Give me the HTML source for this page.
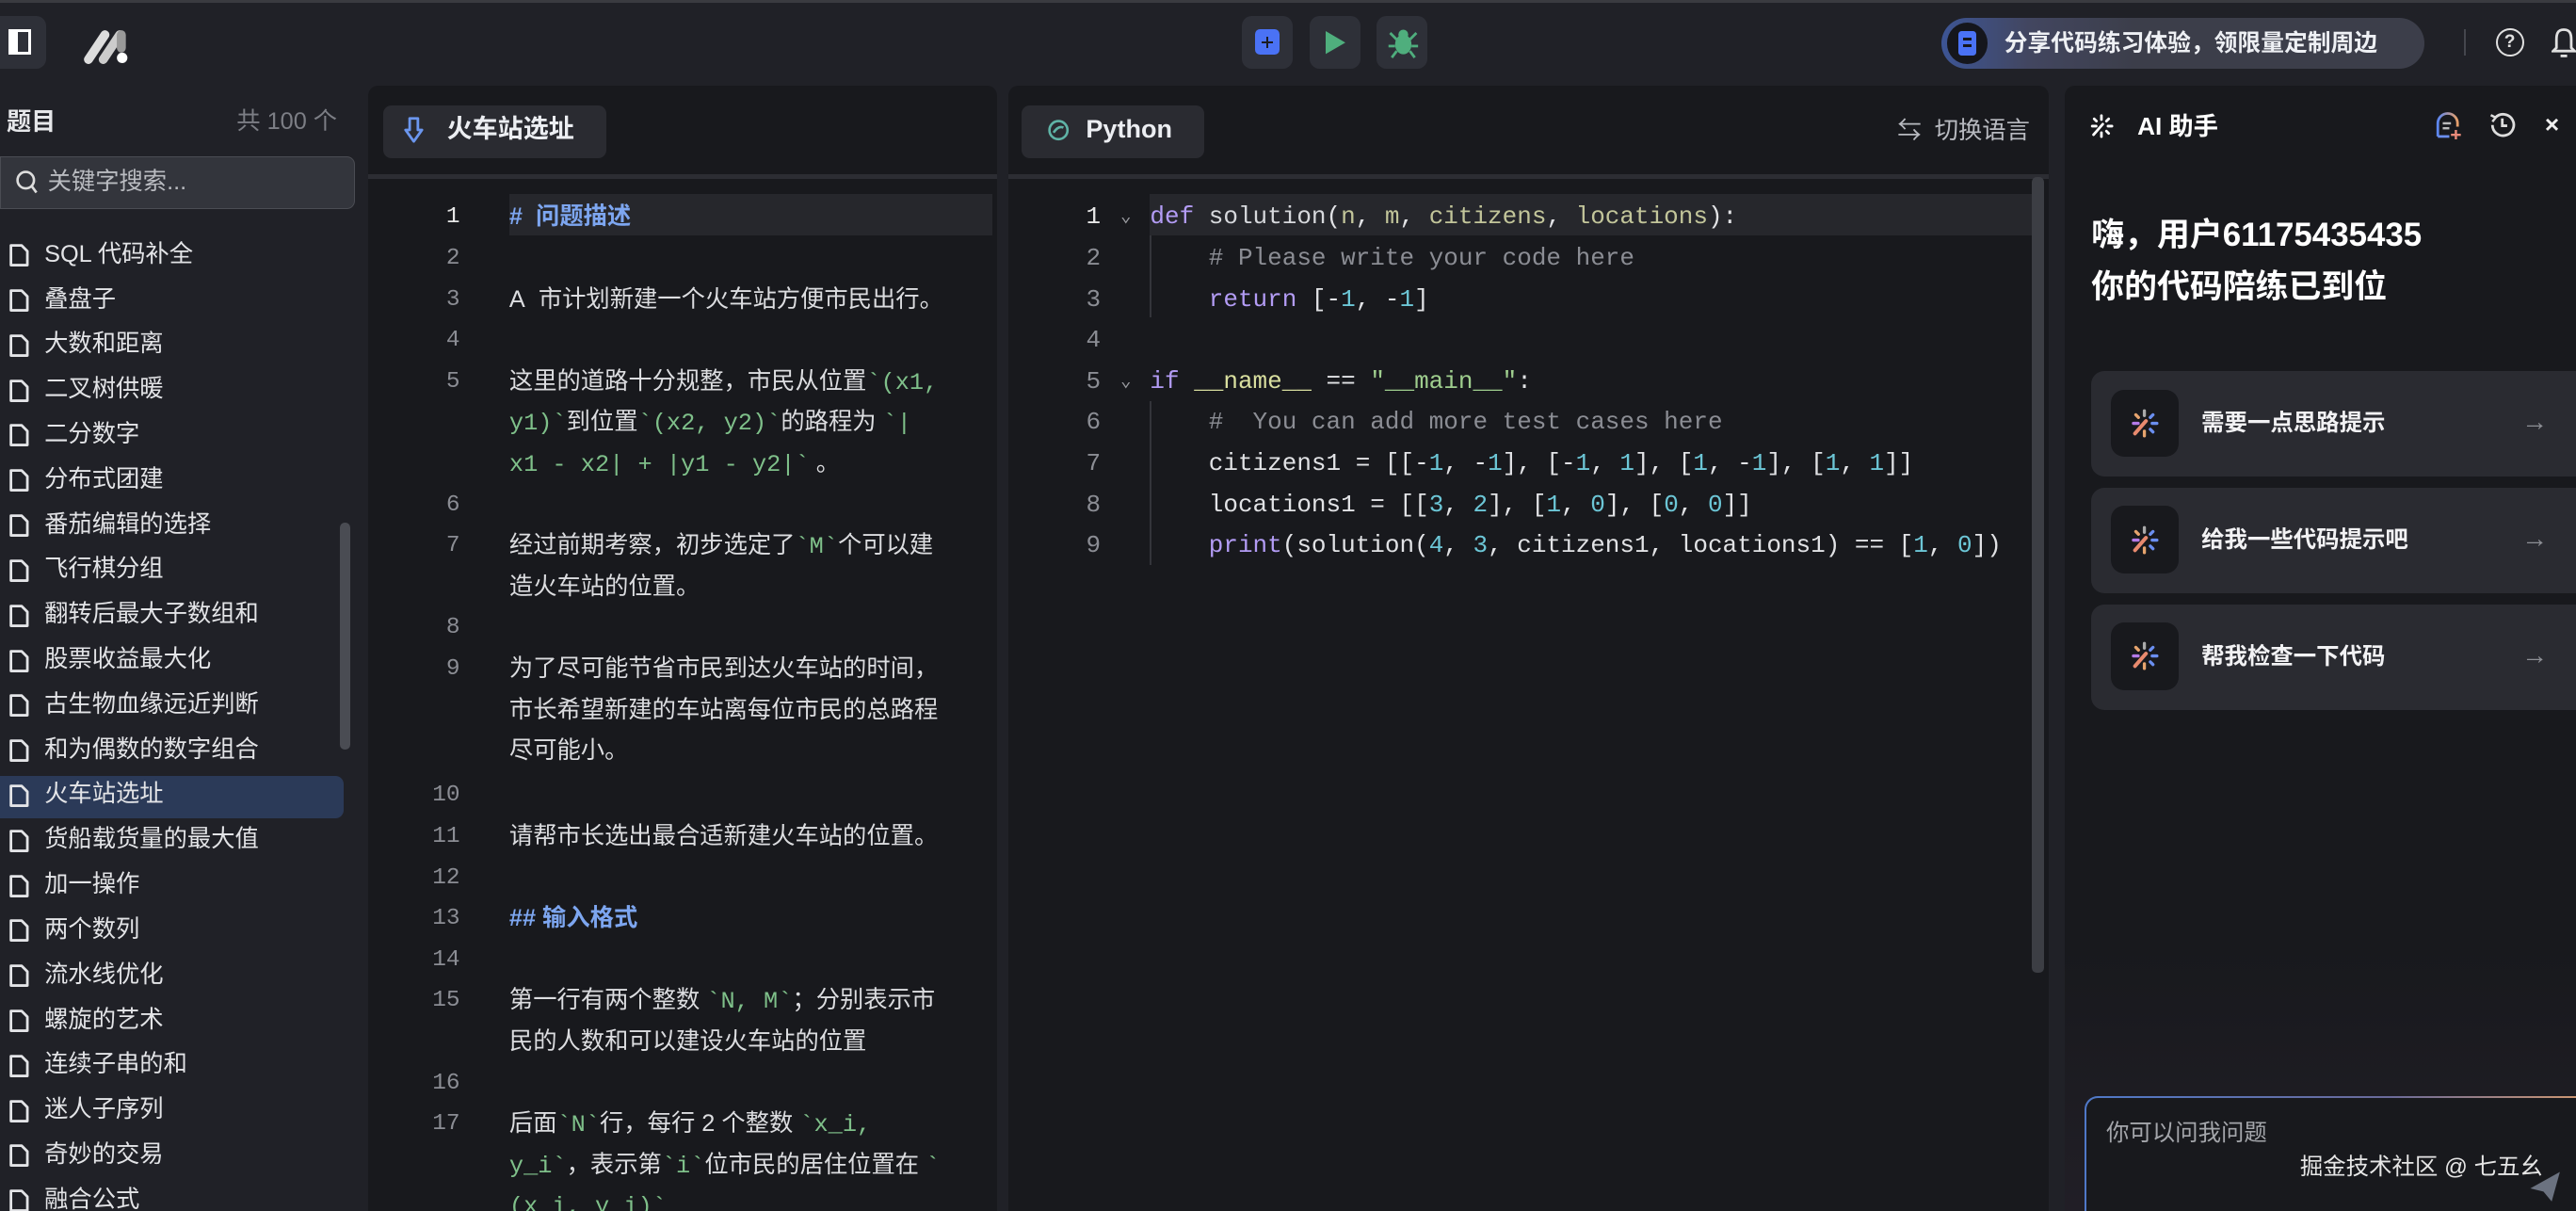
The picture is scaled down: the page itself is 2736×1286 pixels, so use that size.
<!DOCTYPE html>
<html><head><meta charset="utf-8">
<style>
html,body{margin:0;padding:0;background:#1f2026;overflow:hidden;width:2736px;height:1286px}
#r{zoom:1.74490;width:1568px;height:737px;position:relative;background:#202127;font-family:"Liberation Sans","Noto Sans CJK SC",sans-serif;color:#e6e7ea;overflow:hidden}
.a{position:absolute}
.mono{font-family:"Liberation Mono","Noto Sans CJK SC",monospace}
.btn{position:absolute;top:10px;width:31px;height:32px;background:#2e3038;border-radius:6px}
.side-item{position:absolute;left:0;height:26px;width:209px;font-size:14.5px;line-height:26px;color:#e3e4e7}
.side-item svg{position:absolute;left:5px;top:6px}
.side-item span{position:absolute;left:27px}
.md{position:absolute;left:224px;top:120px;width:380px}
.row{height:25px;line-height:25px;font-size:14.5px;position:relative;white-space:nowrap}
.row .n{position:absolute;left:0;width:56px;text-align:right;color:#8b8d94;font-family:"Liberation Mono",monospace;font-size:14px}
.row .t{position:absolute;left:86px;color:#dcdde0}
.g{color:#7fc08a;font-family:"Liberation Mono",monospace}
.row .t.h{color:#7da6f0;font-weight:bold}
.code{position:absolute;left:614px;top:120px}
.cr{height:25px;line-height:25px;font-size:14.9px;position:relative;white-space:pre}
.cr .n{position:absolute;left:0;width:56px;text-align:right;color:#8b8d94}
.cr .f{position:absolute;left:68px;color:#9a9ba0;font-size:11px}
.cr .t{position:absolute;left:86px;color:#e1e2e5}
.k{color:#b39cf5}.fn{color:#d6d8dc}.p{color:#c2c59a}.c{color:#8b8d94}.num{color:#6cc6d6}.s{color:#9fce8e}.nm{color:#d9df9f}
.card{position:absolute;left:1273px;width:310px;height:64px;background:#2a2b31;border-radius:8px}
.card .ic{position:absolute;left:12px;top:11px;width:41px;height:41px;background:#18191d;border-radius:8px}
.card .ic svg{position:absolute;left:11px;top:11px}
.card .tx{position:absolute;left:67px;top:0;line-height:64px;font-size:14px;font-weight:bold;color:#f2f2f4}
.card .ar{position:absolute;left:262px;top:0;line-height:62px;font-size:16px;color:#8d8f95}
</style></head><body><div id="r">
<svg width="0" height="0" style="position:absolute"><defs>
<symbol id="spk" viewBox="0 0 20 20"><g stroke-linecap="round" stroke-width="2">
<line x1="10" y1="2" x2="10" y2="5" stroke="#aaa"/>
<line x1="15.5" y1="4.5" x2="13.8" y2="6.2" stroke="#6b8ff0"/>
<line x1="18" y1="10" x2="15" y2="10" stroke="#6b8ff0"/>
<line x1="15.5" y1="15.5" x2="13.8" y2="13.8" stroke="#6b8ff0"/>
<line x1="10" y1="18" x2="10" y2="15" stroke="#e6a46e"/>
<line x1="3" y1="10" x2="6" y2="10" stroke="#b47ae8"/>
<line x1="4.5" y1="4.5" x2="6.2" y2="6.2" stroke="#e6a46e"/>
<line x1="4" y1="16.5" x2="11" y2="8.5" stroke="#e88a6e" stroke-width="2.4"/>
</g></symbol>
<symbol id="spw" viewBox="0 0 20 20"><g stroke-linecap="round" stroke-width="2" stroke="#fff">
<line x1="10" y1="2" x2="10" y2="5"/><line x1="15.5" y1="4.5" x2="13.8" y2="6.2"/><line x1="18" y1="10" x2="15" y2="10"/><line x1="15.5" y1="15.5" x2="13.8" y2="13.8"/><line x1="10" y1="18" x2="10" y2="15"/><line x1="3" y1="10" x2="6" y2="10"/><line x1="4.5" y1="4.5" x2="6.2" y2="6.2"/><line x1="4" y1="16.5" x2="11" y2="8.5"/>
</g></symbol></defs></svg>
<!-- top line -->
<div class="a" style="left:0;top:0;width:1568px;height:2px;background:#3a3b40"></div>
<!-- left toggle -->
<div class="a" style="left:0;top:10px;width:28px;height:32px;background:#2e3038;border-radius:0 6px 6px 0"></div>
<div class="a" style="left:5px;top:18px;width:14px;height:15px;border:2px solid #fff;box-sizing:border-box;background:#2e3038"></div>
<div class="a" style="left:5px;top:18px;width:6px;height:15px;background:#fff"></div>
<svg class="a" style="left:50px;top:17px" width="32" height="22" viewBox="0 0 32 22"><g stroke-linecap="round" stroke-width="5.5"><line x1="4" y1="19" x2="14" y2="4" stroke="#ddd"/><line x1="13" y1="19" x2="23" y2="4" stroke="#ccc"/><line x1="24" y1="4" x2="24" y2="12" stroke="#999"/></g><circle cx="24.5" cy="18" r="3.2" fill="#fff"/></svg>
<!-- run buttons -->
<div class="btn" style="left:756px"><div class="a" style="left:8px;top:8px;width:15px;height:15px;background:#4a72f5;border-radius:3px"></div><div class="a" style="left:12px;top:15px;width:7px;height:1.5px;background:#1b1c22"></div><div class="a" style="left:14.7px;top:12.3px;width:1.5px;height:7px;background:#1b1c22"></div></div>
<div class="btn" style="left:797px"><svg class="a" style="left:10px;top:9px" width="13" height="14"><polygon points="0,0 12,7 0,14" fill="#4fae7d"/></svg></div>
<div class="btn" style="left:838px"><svg class="a" style="left:6px;top:6px" width="20" height="20" viewBox="0 0 20 20"><ellipse cx="10" cy="11" rx="5" ry="6" fill="#4fae7d"/><circle cx="10" cy="5" r="3" fill="#4fae7d"/><g stroke="#4fae7d" stroke-width="1.6"><line x1="2" y1="4" x2="6" y2="8"/><line x1="18" y1="4" x2="14" y2="8"/><line x1="1" y1="12" x2="5" y2="12"/><line x1="19" y1="12" x2="15" y2="12"/><line x1="3" y1="19" x2="6" y2="15"/><line x1="17" y1="19" x2="14" y2="15"/></g></svg></div>
<!-- share pill -->
<div class="a" style="left:1182px;top:11px;width:294px;height:31px;border-radius:16px;background:linear-gradient(90deg,#3d5595 0%,#424660 18%,#3c3e4a 40%,#3c3e4a 100%)"></div>
<div class="a" style="left:1185px;top:14px;width:25px;height:25px;border-radius:50%;background:#15161c"></div>
<div class="a" style="left:1192px;top:19px;width:11px;height:15px;border-radius:2px;background:#4a72f5"></div>
<div class="a" style="left:1195px;top:23px;width:5px;height:1.5px;background:#15161c"></div><div class="a" style="left:1195px;top:27px;width:5px;height:1.5px;background:#15161c"></div>
<div class="a" style="left:1220px;top:17px;font-size:14.2px;font-weight:bold;color:#eef0f4;line-height:20px">分享代码练习体验，领限量定制周边</div>
<div class="a" style="left:1500px;top:18px;width:1px;height:16px;background:#44464d"></div>
<div class="a" style="left:1519px;top:17px;width:15px;height:15px;border:1.6px solid #e0e0e0;border-radius:50%;font-size:11px;line-height:15px;text-align:center;color:#e0e0e0;font-weight:bold">?</div>
<svg class="a" style="left:1553px;top:16px" width="15" height="20"><path d="M7.5 2 C3.5 2 3 5 3 8 V13 L1 15 H14 L12 13 V8 C12 5 11.5 2 7.5 2 Z" fill="none" stroke="#e0e0e0" stroke-width="1.6"/><line x1="5.5" y1="18" x2="9.5" y2="18" stroke="#e0e0e0" stroke-width="1.6"/></svg>

<!-- sidebar -->
<div class="a" style="left:4px;top:64px;font-size:15px;font-weight:bold;line-height:20px">题目</div>
<div class="a" style="left:144px;top:64px;font-size:14.5px;color:#7c7e85;line-height:20px">共 100 个</div>
<div class="a" style="left:0;top:95px;width:216px;height:32px;background:#33353c;border:1px solid #4a4c53;border-radius:0 5px 5px 0;box-sizing:border-box"></div>
<svg class="a" style="left:9px;top:103px" width="15" height="16"><circle cx="6.5" cy="6.5" r="5" fill="none" stroke="#ddd" stroke-width="1.5"/><line x1="10" y1="10" x2="13" y2="14" stroke="#ddd" stroke-width="1.5"/></svg>
<div class="a" style="left:29px;top:101px;font-size:14.5px;color:#b9bbc0;line-height:20px">关键字搜索...</div>
<div class="a" style="left:207px;top:318px;width:6px;height:138px;border-radius:3px;background:#4a4c53"></div>
<div class="a" style="left:0;top:472px;width:209px;height:26px;background:#2b3a58;border-radius:0 5px 5px 0"></div>
<div id="side"></div>

<!-- panel 1 -->
<div class="a" style="left:224px;top:52px;width:383px;height:700px;background:#18191d;border-radius:6px 6px 0 0"></div>
<div class="a" style="left:224px;top:106px;width:383px;height:3px;background:#2c2d33"></div>
<div class="a" style="left:233px;top:64px;width:136px;height:32px;background:#2a2b31;border-radius:5px"></div>
<svg class="a" style="left:246px;top:71px" width="12" height="17"><path d="M3.5 1 H8.5 V8 H11 L6 15 L1 8 H3.5 Z" fill="none" stroke="#6b96ee" stroke-width="1.6" stroke-linejoin="round"/></svg>
<div class="a" style="left:272px;top:69px;font-size:15.5px;font-weight:bold;line-height:20px;color:#eceef2">火车站选址</div>
<div class="a" style="left:310px;top:118px;width:294px;height:25px;background:#26272c"></div>
<div class="md">
<div class="row"><span class="n" style="color:#e6e6e6">1</span><span class="t h">#&nbsp; 问题描述</span></div>
<div class="row"><span class="n">2</span></div>
<div class="row"><span class="n">3</span><span class="t">A&nbsp; 市计划新建一个火车站方便市民出行。</span></div>
<div class="row"><span class="n">4</span></div>
<div class="row"><span class="n">5</span><span class="t">这里的道路十分规整，市民从位置<span class="g">`(x1,</span></span></div>
<div class="row"><span class="t"><span class="g">y1)`</span>到位置<span class="g">`(x2, y2)`</span>的路程为 <span class="g">`|</span></span></div>
<div class="row"><span class="t"><span class="g">x1 - x2| + |y1 - y2|`</span> 。</span></div>
<div class="row"><span class="n">6</span></div>
<div class="row"><span class="n">7</span><span class="t">经过前期考察，初步选定了<span class="g">`M`</span>个可以建</span></div>
<div class="row"><span class="t">造火车站的位置。</span></div>
<div class="row"><span class="n">8</span></div>
<div class="row"><span class="n">9</span><span class="t">为了尽可能节省市民到达火车站的时间，</span></div>
<div class="row"><span class="t">市长希望新建的车站离每位市民的总路程</span></div>
<div class="row"><span class="t">尽可能小。</span></div>
<div class="row" style="margin-top:2px"><span class="n">10</span></div>
<div class="row"><span class="n">11</span><span class="t">请帮市长选出最合适新建火车站的位置。</span></div>
<div class="row"><span class="n">12</span></div>
<div class="row"><span class="n">13</span><span class="t h">## 输入格式</span></div>
<div class="row"><span class="n">14</span></div>
<div class="row"><span class="n">15</span><span class="t">第一行有两个整数 <span class="g">`N, M`</span>；分别表示市</span></div>
<div class="row"><span class="t">民的人数和可以建设火车站的位置</span></div>
<div class="row"><span class="n">16</span></div>
<div class="row"><span class="n">17</span><span class="t">后面<span class="g">`N`</span>行，每行 2 个整数 <span class="g">`x_i,</span></span></div>
<div class="row"><span class="t"><span class="g">y_i`</span>，表示第<span class="g">`i`</span>位市民的居住位置在 <span class="g">`</span></span></div>
<div class="row"><span class="t"><span class="g">(x_i, y_i)`</span></span></div>
</div>

<!-- panel 2 -->
<div class="a" style="left:614px;top:52px;width:633px;height:700px;background:#18191d;border-radius:6px 6px 0 0"></div>
<div class="a" style="left:614px;top:106px;width:633px;height:3px;background:#2c2d33"></div>
<div class="a" style="left:622px;top:64px;width:111px;height:32px;background:#2a2b31;border-radius:5px"></div>
<svg class="a" style="left:637px;top:72px" width="14" height="14"><circle cx="7" cy="7" r="5.5" fill="none" stroke="#5fb3a6" stroke-width="1.5"/><path d="M4 8.5 Q7 4 10 5.5" fill="none" stroke="#5fb3a6" stroke-width="1.5"/></svg>
<div class="a" style="left:661px;top:69px;font-size:15.5px;font-weight:bold;line-height:20px;color:#eceef2">Python</div>
<div class="a" style="left:1155px;top:70px;font-size:14.5px;line-height:20px;color:#b8bac0">⇆&nbsp; 切换语言</div>
<div class="a" style="left:700px;top:118px;width:540px;height:25px;background:#26272c"></div>
<div class="a" style="left:1237px;top:108px;width:7px;height:484px;border-radius:3px;background:#3c3e44"></div>
<div class="a" style="left:700px;top:143px;width:1px;height:50px;background:#33343a"></div>
<div class="a" style="left:700px;top:244px;width:1px;height:100px;background:#33343a"></div>
<div class="code mono">
<div class="cr"><span class="n" style="color:#e6e6e6">1</span><span class="f">⌄</span><span class="t"><span class="k">def</span> <span class="fn">solution</span>(<span class="p">n</span>, <span class="p">m</span>, <span class="p">citizens</span>, <span class="p">locations</span>):</span></div>
<div class="cr"><span class="n">2</span><span class="t">    <span class="c"># Please write your code here</span></span></div>
<div class="cr"><span class="n">3</span><span class="t">    <span class="k">return</span> [-<span class="num">1</span>, -<span class="num">1</span>]</span></div>
<div class="cr"><span class="n">4</span></div>
<div class="cr"><span class="n">5</span><span class="f">⌄</span><span class="t"><span class="k">if</span> <span class="nm">__name__</span> == <span class="s">"__main__"</span>:</span></div>
<div class="cr"><span class="n">6</span><span class="t">    <span class="c">#  You can add more test cases here</span></span></div>
<div class="cr"><span class="n">7</span><span class="t">    citizens1 = [[-<span class="num">1</span>, -<span class="num">1</span>], [-<span class="num">1</span>, <span class="num">1</span>], [<span class="num">1</span>, -<span class="num">1</span>], [<span class="num">1</span>, <span class="num">1</span>]]</span></div>
<div class="cr"><span class="n">8</span><span class="t">    locations1 = [[<span class="num">3</span>, <span class="num">2</span>], [<span class="num">1</span>, <span class="num">0</span>], [<span class="num">0</span>, <span class="num">0</span>]]</span></div>
<div class="cr"><span class="n">9</span><span class="t">    <span class="k">print</span>(solution(<span class="num">4</span>, <span class="num">3</span>, citizens1, locations1) == [<span class="num">1</span>, <span class="num">0</span>])</span></div>
</div>

<!-- AI panel -->
<div class="a" style="left:1257px;top:52px;width:320px;height:700px;background:linear-gradient(180deg,#18191d 0%,#18191d 75%,#221f27 100%);border-radius:6px 0 0 0"></div>
<svg class="a" style="left:1271px;top:69px" width="16" height="16"><use href="#spw"/></svg>
<div class="a" style="left:1301px;top:67px;font-size:15px;font-weight:bold;line-height:20px;color:#fff">AI 助手</div>
<svg class="a" style="left:1481px;top:67px" width="18" height="18"><path d="M3 16 V8 A6 6 0 0 1 15 8 V10" fill="none" stroke="url(#gg)" stroke-width="1.6"/><line x1="3" y1="16" x2="10" y2="16" stroke="#6b8ff0" stroke-width="1.6"/><line x1="6" y1="8" x2="11" y2="8" stroke="#bbb" stroke-width="1.4"/><line x1="6" y1="11" x2="10" y2="11" stroke="#bbb" stroke-width="1.4"/><path d="M14 12 V18 M11 15 H17" stroke="#e98a7a" stroke-width="1.4"/><defs><linearGradient id="gg" x1="0" x2="1"><stop offset="0" stop-color="#5b86f0"/><stop offset="1" stop-color="#e7a06a"/></linearGradient></defs></svg>
<svg class="a" style="left:1514px;top:67px" width="18" height="18"><path d="M3 9 A6.5 6.5 0 1 0 5 4.3" fill="none" stroke="#ddd" stroke-width="1.6"/><path d="M2 3 L5 4.5 L3 7" fill="none" stroke="#ddd" stroke-width="1.4"/><path d="M9 5 V9.5 H12" fill="none" stroke="#ddd" stroke-width="1.6"/></svg>
<div class="a" style="left:1549px;top:66px;font-size:15px;font-weight:bold;color:#eee;line-height:20px">×</div>
<div class="a" style="left:1273px;top:127px;font-size:20px;font-weight:bold;line-height:32px;color:#fff">嗨，用户61175435435<br>你的代码陪练已到位</div>
<div class="card" style="top:226px"><div class="ic"><svg width="19" height="19"><use href="#spk"/></svg></div><div class="tx">需要一点思路提示</div><div class="ar">→</div></div>
<div class="card" style="top:297px"><div class="ic"><svg width="19" height="19"><use href="#spk"/></svg></div><div class="tx">给我一些代码提示吧</div><div class="ar">→</div></div>
<div class="card" style="top:368px"><div class="ic"><svg width="19" height="19"><use href="#spk"/></svg></div><div class="tx">帮我检查一下代码</div><div class="ar">→</div></div>
<div class="a" style="left:1269px;top:667px;width:310px;height:80px;border-radius:8px;background:linear-gradient(90deg,#4f78c8,#6a6a9a 60%,#d59a6e);"></div>
<div class="a" style="left:1270px;top:668px;width:310px;height:80px;border-radius:7px;background:#18191d"></div>
<div class="a" style="left:1282px;top:680px;font-size:14px;color:#a4a6ab;line-height:20px">你可以问我问题</div>
<div class="a" style="left:1400px;top:701px;font-size:14px;color:#e6e6e6;line-height:20px">掘金技术社区 @ 七五幺</div>
<svg class="a" style="left:1538px;top:711px" width="22" height="22"><polygon points="2,12 20,2 15,20 10,14" fill="#6b7280"/></svg>
</div>
<script>
var items=["SQL 代码补全","叠盘子","大数和距离","二叉树供暖","二分数字","分布式团建","番茄编辑的选择","飞行棋分组","翻转后最大子数组和","股票收益最大化","古生物血缘远近判断","和为偶数的数字组合","火车站选址","货船载货量的最大值","加一操作","两个数列","流水线优化","螺旋的艺术","连续子串的和","迷人子序列","奇妙的交易","融合公式"];
var h="";for(var i=0;i<items.length;i++){var y=142+i*27.4;h+='<div class="side-item" style="top:'+y+'px"><svg width="13" height="15"><path d="M1.5 1.5 H8 L11.5 5 V13.5 H1.5 Z" fill="none" stroke="#e3e4e7" stroke-width="1.6" stroke-linejoin="round"/></svg><span>'+items[i]+'</span></div>';}
document.getElementById("side").innerHTML=h;
</script>
</body></html>
